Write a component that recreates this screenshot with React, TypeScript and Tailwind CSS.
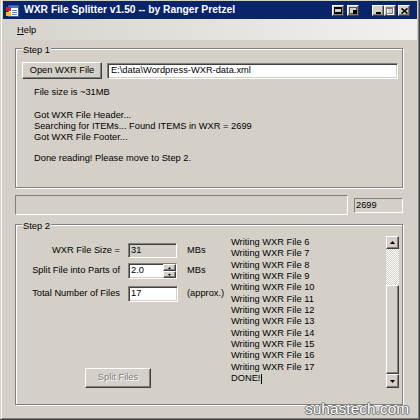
import React from "react";

const raised =
  "bg-[#d4d0c8] border border-t-white border-l-white border-b-[#404040] border-r-[#404040] shadow-[inset_-1px_-1px_0_#808080]";
const sunken =
  "border border-t-[#808080] border-l-[#808080] border-b-white border-r-white shadow-[inset_1px_1px_0_#404040,inset_-1px_-1px_0_#d4d0c8]";
const thinSunken =
  "border border-t-[#808080] border-l-[#808080] border-b-white border-r-white";
const etched =
  "border border-[#808080] shadow-[inset_1px_1px_0_#ffffff,1px_1px_0_#ffffff]";

function TBtn({ children }: { children: React.ReactNode }) {
  return (
    <div className={"w-[12px] h-[11px] flex items-center justify-center " + raised}>
      {children}
    </div>
  );
}

function AppIcon() {
  return (
    <svg width="15" height="14" viewBox="0 0 15 14">
      <rect x="3.5" y="1.5" width="10" height="11" fill="#ffffff" stroke="#3a5a9a" />
      <rect x="4" y="2" width="9" height="2" fill="#4a78c8" />
      <rect x="1" y="3" width="5" height="4" fill="#d02020" />
      <rect x="1" y="8" width="5" height="4" fill="#f0c818" />
      <rect x="7" y="6" width="5" height="1" fill="#6080c0" />
      <rect x="7" y="8" width="5" height="1" fill="#6080c0" />
      <rect x="7" y="10" width="5" height="1" fill="#6080c0" />
    </svg>
  );
}

function Arrow({ up }: { up: boolean }) {
  return (
    <svg width="5" height="3" viewBox="0 0 5 3">
      {up ? <polygon points="2.5,0 5,3 0,3" fill="#000" /> : <polygon points="0,0 5,0 2.5,3" fill="#000" />}
    </svg>
  );
}

function GroupBox({
  title,
  className,
  children,
}: {
  title: string;
  className: string;
  children: React.ReactNode;
}) {
  return (
    <div className={"relative " + etched + " " + className}>
      <span className="absolute left-[6px] top-[-4px] bg-[#d4d0c8] px-[1px] leading-[10px]">{title}</span>
      {children}
    </div>
  );
}

const logLines = [
  "Writing WXR File 6",
  "Writing WXR File 7",
  "Writing WXR File 8",
  "Writing WXR File 9",
  "Writing WXR File 10",
  "Writing WXR File 11",
  "Writing WXR File 12",
  "Writing WXR File 13",
  "Writing WXR File 14",
  "Writing WXR File 15",
  "Writing WXR File 16",
  "Writing WXR File 17",
];

export default function App() {
  return (
    <div className="w-[420px] h-[420px] bg-[#d4d0c8] pl-[1px] border-r border-b border-r-[#404040] border-b-[#404040] font-['Liberation_Sans',Arial,sans-serif] text-[9.3px] leading-none text-black relative overflow-hidden flex">
      <div className="flex-1 flex flex-col border-l border-l-white border-r border-r-[#808080] border-b border-b-[#808080] pl-[1px] pr-[1px] pt-[1px]">
        {/* Title bar */}
        <div className="h-[18px] shrink-0 bg-[#0a246a] flex items-center pl-[2px] pr-[7px] pt-[1px]">
          <AppIcon />
          <span className="ml-[4px] text-white font-bold text-[10.3px] whitespace-nowrap">
            WXR File Splitter v1.50 -- by Ranger Pretzel
          </span>
          <div className="ml-auto flex items-center">
            <TBtn>
              <svg width="8" height="7" viewBox="0 0 8 7">
                <rect x="0" y="0" width="8" height="2" fill="#000" />
                <rect x="0.5" y="0.5" width="7" height="6" fill="none" stroke="#000" />
                <rect x="0" y="5" width="8" height="2" fill="#000" />
              </svg>
            </TBtn>
            <div className="ml-[3px]">
              <TBtn>
                <svg width="8" height="7" viewBox="0 0 8 7">
                  <rect x="0.5" y="0.5" width="7" height="6" fill="none" stroke="#555" />
                  <rect x="4" y="3" width="4" height="4" fill="#000" />
                </svg>
              </TBtn>
            </div>
            <div className="ml-[13px] flex">
              <TBtn>
                <svg width="7" height="7" viewBox="0 0 7 7">
                  <rect x="1" y="5" width="5" height="2" fill="#000" />
                </svg>
              </TBtn>
              <TBtn>
                <svg width="8" height="8" viewBox="0 0 8 8">
                  <rect x="1.5" y="1.5" width="6" height="6" fill="none" stroke="#ffffff" />
                  <rect x="0.5" y="0.5" width="6" height="6" fill="none" stroke="#808080" />
                  <rect x="0" y="0" width="7" height="2" fill="#808080" />
                </svg>
              </TBtn>
            </div>
            <div className="ml-[2px]">
              <TBtn>
                <svg width="7" height="6" viewBox="0 0 7 6">
                  <path d="M0.5 0.5 L6.5 5.5 M6.5 0.5 L0.5 5.5" stroke="#000" strokeWidth="1.6" />
                </svg>
              </TBtn>
            </div>
          </div>
        </div>

        {/* Menu bar */}
        <div className="h-[21px] shrink-0 bg-[linear-gradient(to_right,#d6d3cc,#f2f1ef)] flex items-center pl-[14px] pt-[2px]">
          <span>
            <span className="underline">H</span>elp
          </span>
        </div>

        {/* Step 1 */}
        <GroupBox title="Step 1" className="ml-[12px] mt-[8px] w-[388px] h-[140px] shrink-0">
          <div className="flex items-start pl-[6px] pt-[13px]">
            <div className={"w-[80px] h-[17px] flex items-center justify-center " + raised}>Open WXR File</div>
            <div className={"ml-[5px] mt-[1px] w-[291px] h-[16px] bg-white flex items-center pl-[3px] " + sunken}>
              E:\data\Wordpress-WXR-data.xml
            </div>
          </div>
          <div className="ml-[18px] mt-[8px] leading-[11px]">File size is ~31MB</div>
          <div className="ml-[18px] mt-[12px] leading-[10.8px]">
            <div>Got WXR File Header...</div>
            <div>Searching for ITEMs... Found ITEMS in WXR = 2699</div>
            <div>Got WXR File Footer...</div>
            <div>&nbsp;</div>
            <div>Done reading! Please move to Step 2.</div>
          </div>
        </GroupBox>

        {/* Progress row */}
        <div className="ml-[12px] mt-[7px] flex items-start shrink-0">
          <div className={"w-[333px] h-[20px] " + thinSunken}></div>
          <div className={"ml-[6px] mt-[3px] w-[49px] h-[15px] flex items-center pl-[1px] " + thinSunken}>2699</div>
        </div>

        {/* Step 2 */}
        <GroupBox title="Step 2" className="ml-[12px] mt-[9px] w-[388px] h-[181px] shrink-0">
          <div className="flex">
            <div className="w-[213px] flex flex-col">
              <div className="mt-[18px] h-[15px] flex items-center">
                <div className="w-[104px] text-right">WXR File Size =</div>
                <div className={"ml-[8px] w-[49px] h-[15px] flex items-center pl-[2px] " + sunken}>31</div>
                <div className="ml-[10px]">MBs</div>
              </div>
              <div className="mt-[5px] h-[16px] flex items-center">
                <div className="w-[104px] text-right">Split File into Parts of</div>
                <div className={"ml-[8px] w-[49px] h-[16px] bg-white flex items-center pl-[2px] " + sunken}>
                  <span className="flex-1">2.0</span>
                  <div className="w-[13px] h-[14px] flex flex-col">
                    <div className={"h-[7px] flex items-center justify-center " + raised}>
                      <svg width="3" height="2" viewBox="0 0 3 2">
                        <polygon points="1.5,0 3,2 0,2" fill="#000" />
                      </svg>
                    </div>
                    <div className={"h-[7px] flex items-center justify-center " + raised}>
                      <svg width="3" height="2" viewBox="0 0 3 2">
                        <polygon points="0,0 3,0 1.5,2" fill="#000" />
                      </svg>
                    </div>
                  </div>
                </div>
                <div className="ml-[10px]">MBs</div>
              </div>
              <div className="mt-[7px] h-[16px] flex items-center">
                <div className="w-[104px] text-right">Total Number of Files</div>
                <div className={"ml-[8px] w-[50px] h-[16px] bg-white flex items-center pl-[2px] " + sunken}>17</div>
                <div className="ml-[9px]">(approx.)</div>
              </div>
              <div
                className={
                  "ml-[69px] mt-[66px] w-[66px] h-[20px] flex items-center justify-center text-[#808080] [text-shadow:1px_1px_0_#ffffff] " +
                  raised
                }
              >
                Split Files
              </div>
            </div>
            <div className="flex-1 flex mt-[11px] pr-[3px]">
              <div className="flex-1 pl-[2px] pt-[1px] leading-[11.33px]">
                {logLines.map((l) => (
                  <div key={l} className="whitespace-nowrap">{l}</div>
                ))}
                <div className="flex items-center">
                  DONE!<span className="inline-block w-[1px] h-[10px] bg-black ml-[1px]"></span>
                </div>
              </div>
              <div className="w-[13px] h-[152px] flex flex-col">
                <div className={"h-[13px] flex items-center justify-center " + raised}>
                  <Arrow up={true} />
                </div>
                <div className="h-[36px] bg-[repeating-conic-gradient(#ffffff_0%_25%,#d4d0c8_0%_50%)] bg-size-[2px_2px]"></div>
                <div className={"h-[89px] " + raised}></div>
                <div className={"h-[14px] flex items-center justify-center " + raised}>
                  <Arrow up={false} />
                </div>
              </div>
            </div>
          </div>
        </GroupBox>
      </div>

      <div className="absolute left-[305px] top-[401px] text-[15.5px] leading-none text-white whitespace-nowrap [text-shadow:1px_0_0_#707070,-1px_0_0_#707070,0_1px_0_#707070,0_-1px_0_#707070]">
        suhastech.com
      </div>
    </div>
  );
}
